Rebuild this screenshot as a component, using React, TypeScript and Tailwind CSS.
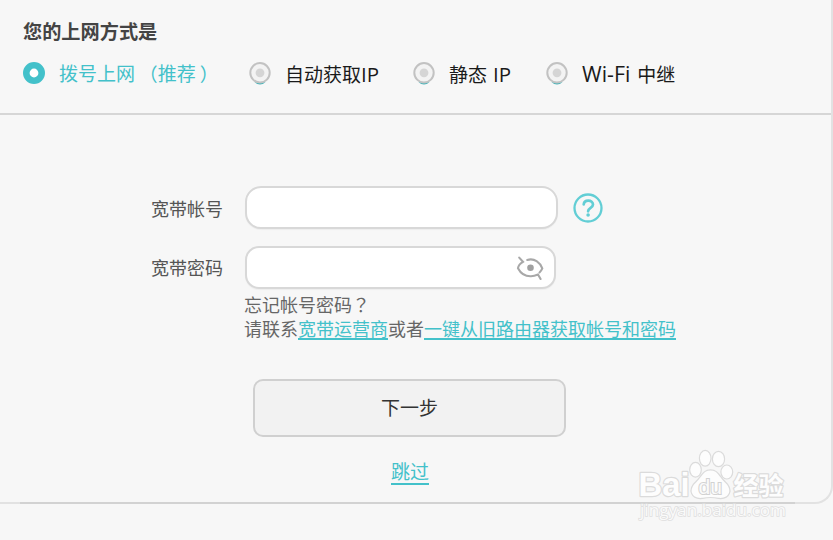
import React from 'react';

const teal = 'text-[#43c1ca]';

function Radio({ checked = false }: { checked?: boolean }) {
  return (
    <svg className="block h-6 w-6 shrink-0" viewBox="0 0 24 24" fill="none">
      {checked ? (
        <circle cx="12" cy="12" r="7.7" fill="#fff" stroke="#43c1ca" strokeWidth="6.6" />
      ) : (
        <>
          <path d="M6.5 21.2 Q12 26 17.5 21.2Z" fill="#43b3b8" />
          <circle cx="12" cy="11.8" r="9.7" fill="#f3f3f3" stroke="#c2c2c2" strokeWidth="2" />
          <circle cx="12" cy="11.8" r="4.4" fill="#d5d5d5" />
        </>
      )}
    </svg>
  );
}

function HelpIcon() {
  return (
    <svg className="block h-8 w-8" viewBox="0 0 32 32" fill="none" stroke="#62ced5" strokeLinecap="round">
      <circle cx="16" cy="16" r="13.5" strokeWidth="2.3" />
      <path d="M11.7 12.4 C12 9.8 13.8 8.6 16.2 8.6 C19 8.6 21 10.2 21 12.5 C21 16 16.1 15.6 16.1 19.3" strokeWidth="2.7" />
      <circle cx="16.1" cy="23" r="1.8" fill="#62ced5" stroke="none" />
    </svg>
  );
}

function EyeOffIcon() {
  return (
    <svg className="block h-7 w-8" viewBox="0 0 32 28" fill="none" stroke="#a8a8a8" strokeWidth="2.1" strokeLinecap="round">
      <path d="M5.2 3.6 L9 7.8 C5.7 9.7 4.2 12.4 4 14.2 C7 20 12 22.4 17 22.2 C20 22.2 22.4 21.2 24 20.5 L26.6 25" />
      <path d="M13.2 5.9 C20.5 3.7 26 8.4 28.3 14.4 C27.6 16 26.7 17.5 25.5 18.5" />
      <circle cx="16.5" cy="13.8" r="3.3" fill="#a0a0a0" stroke="none" />
    </svg>
  );
}

function Watermark() {
  return (
    <svg className="pointer-events-none absolute left-[630px] top-[440px] h-[90px] w-[170px]" viewBox="0 0 170 90">
      <g fill="#fdfdfd" stroke="#dbdbdb" strokeWidth="2.4" paintOrder="stroke" strokeLinejoin="round">
        <text x="8.5" y="56" fontFamily="Liberation Sans, Arial, sans-serif" fontWeight="700" fontSize="33" textLength="51" lengthAdjust="spacingAndGlyphs">Bai</text>
        <ellipse cx="65.5" cy="29.8" rx="5.2" ry="6.8" />
        <ellipse cx="75.2" cy="18.3" rx="5.2" ry="7.3" />
        <ellipse cx="88.5" cy="19" rx="5.5" ry="7" />
        <ellipse cx="96.8" cy="32" rx="5.3" ry="6.4" />
        <path d="M80.5 30.5 C73 30.5 72 37 66.5 42 C57.5 50 62 59 72.5 57.8 Q80.5 56 88.5 57.8 C99 59 103.5 50 94.5 42 C89 37 88 30.5 80.5 30.5Z" />
        <text x="103.5" y="54.5" fontFamily="Noto Sans CJK SC, sans-serif" fontWeight="700" fontSize="25.5" textLength="50" lengthAdjust="spacingAndGlyphs">经验</text>
      </g>
      <text x="68.5" y="54" fill="#fafafa" stroke="#d2d2d2" strokeWidth="2" paintOrder="stroke" fontFamily="Liberation Sans, Arial, sans-serif" fontSize="20.5" textLength="23.5" lengthAdjust="spacingAndGlyphs">du</text>
      <text x="10" y="76" fill="#fafafa" stroke="#dfdfdf" strokeWidth="1.6" paintOrder="stroke" fontFamily="Open Sans, Noto Sans, sans-serif" fontSize="17" textLength="146" lengthAdjust="spacingAndGlyphs">jingyan.baidu.com</text>
    </svg>
  );
}

const inputClass =
  'border-2 border-[#d8d8d8] bg-white outline-none px-4 text-base shadow-[0_1px_1px_rgba(0,0,0,0.04)]';
const linkClass = `${teal} underline decoration-[1.5px] underline-offset-[1.5px] [text-decoration-skip-ink:none]`;

export default function App() {
  return (
    <div className="relative h-[540px] w-[833px] overflow-hidden bg-[#f7f7f7] font-['Open_Sans','Noto_Sans_CJK_SC',sans-serif] text-[#555]">
      <main className="flex h-[504px] flex-col rounded-br-[18px] border-b-2 border-r-2 border-[#e2e2e2]">
        <header className="h-[115px] shrink-0 border-b-2 border-[#d6d6d6] pt-[18px]">
          <h1 className="ml-[23px] text-[19.2px] font-bold leading-7 text-[#444]">您的上网方式是</h1>
          <div className="ml-[22px] mt-[15px] flex h-6 items-center whitespace-nowrap text-[19px] leading-6 text-[#1a1a1a]">
            <label className="flex h-6 w-[226px] gap-[13px]">
              <Radio checked />
              <span className={`${teal} font-['Noto_Sans_CJK_SC',sans-serif]`}>
                拨号上网<span className="ml-1 text-[18.6px]">（</span>推荐<span className="ml-1 text-[18.6px]">）</span>
              </span>
            </label>
            <label className="flex h-6 w-[164px] gap-[13px]">
              <Radio />
              <span className="pt-px">自动获取<span className="text-[20.5px]">IP</span></span>
            </label>
            <label className="flex h-6 w-[133px] gap-[13px]">
              <Radio />
              <span className="pt-px">静态 <span className="ml-px text-[20.5px]">IP</span></span>
            </label>
            <label className="flex h-6 gap-[13px]">
              <Radio />
              <span className="pt-px"><span className="mr-[2px] text-[21.3px]">Wi-Fi</span> 中继</span>
            </label>
          </div>
        </header>

        <form className="flex flex-col pt-[71px] text-[18px]">
          <div className="flex h-[43px] items-center">
            <label className="ml-[151px] w-[94px] pt-1">宽带帐号</label>
            <input className={`${inputClass} h-[43px] w-[313px] rounded-[16px]`} />
            <span className="ml-[14px] mt-px"><HelpIcon /></span>
          </div>
          <div className="mt-[17px] flex h-[43px] items-center">
            <label className="ml-[151px] w-[94px] pt-px">宽带密码</label>
            <div className={`${inputClass} flex h-[43px] w-[311px] items-center rounded-[14px]`}>
              <input type="password" className="min-w-0 flex-1 outline-none" />
              <span className="-mr-2"><EyeOffIcon /></span>
            </div>
          </div>
          <div className="ml-[244px] mt-[3px] whitespace-nowrap font-['Noto_Sans_CJK_SC',sans-serif] leading-6 text-[#666]">
            <p>忘记帐号密码<span className="font-['Noto_Sans_CJK_TC',sans-serif]">？</span></p>
            <p>
              请联系<a className={linkClass}>宽带运营商</a>或者<a className={linkClass}>一键从旧路由器获取帐号和密码</a>
            </p>
          </div>
          <button type="button" className="ml-[253px] mt-[39px] h-[58px] w-[313px] rounded-[10px] border-2 border-[#d0d0d0] bg-[#f2f2f2] text-[19px] text-[#333]">
            下一步
          </button>
          <a className={`${teal} ml-[391px] mt-[21px] h-[27px] w-[38px] border-b-2 border-[#43c1ca] text-[19px] leading-[28px]`}>跳过</a>
        </form>
      </main>
      <div className="-mt-[2px] ml-5 h-[2px] w-[775px] bg-[#d2d2d2]" />
      <Watermark />
    </div>
  );
}
